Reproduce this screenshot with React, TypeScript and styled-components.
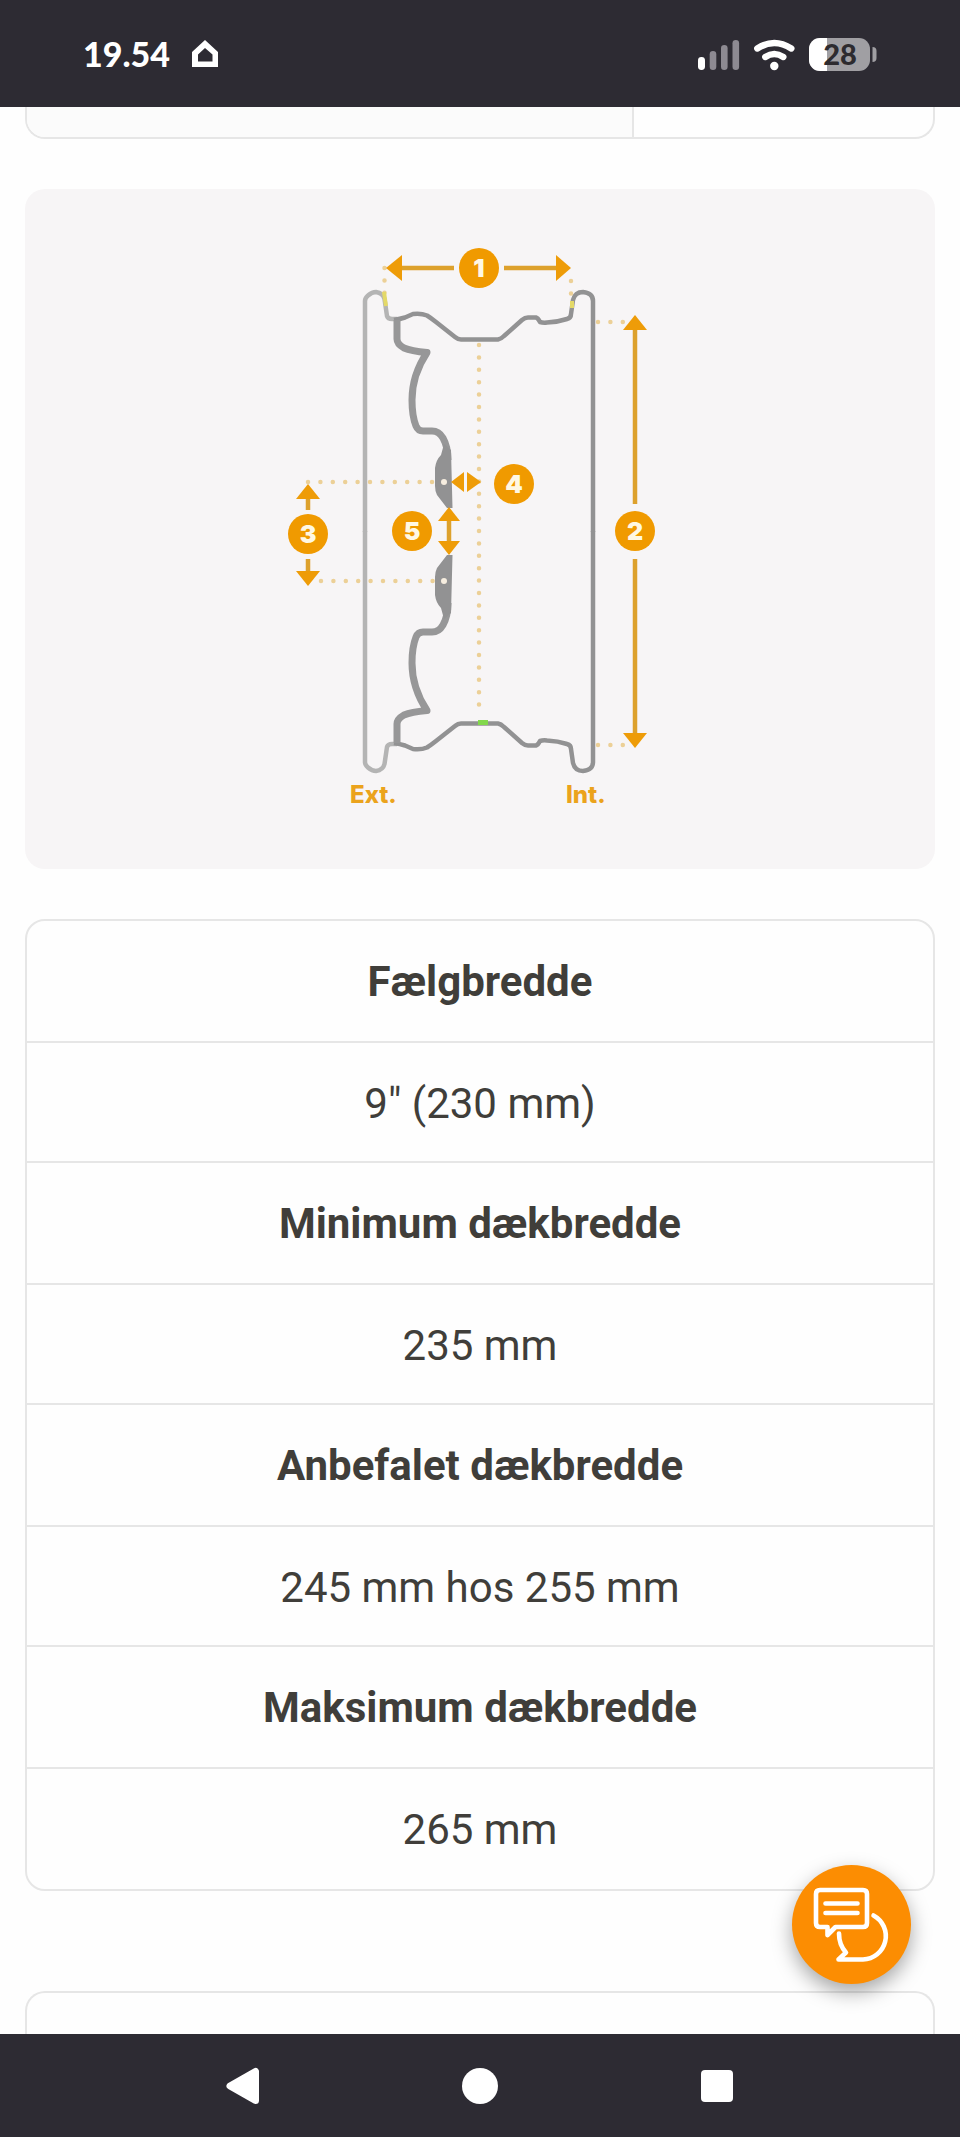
import React from 'react';
import styled, { createGlobalStyle } from 'styled-components';

const specs = [
  { label: 'Fælgbredde', value: '9" (230 mm)' },
  { label: 'Minimum dækbredde', value: '235 mm' },
  { label: 'Anbefalet dækbredde', value: '245 mm hos 255 mm' },
  { label: 'Maksimum dækbredde', value: '265 mm' },
];

const markers = [
  { n: 1, x: 479, y: 268 },
  { n: 2, x: 635, y: 531 },
  { n: 3, x: 308, y: 534 },
  { n: 4, x: 514, y: 484 },
  { n: 5, x: 412, y: 531 },
];

const StatusIcons = () => (
  <svg width="180" height="36" viewBox="697 36 180 36" aria-hidden="true">
    <rect x="698" y="57" width="7" height="13" rx="3.4" fill="#fff" />
    <g fill="#8d8a92">
      <rect x="709.7" y="51" width="6.6" height="19" rx="3.3" />
      <rect x="721" y="45" width="6.6" height="25" rx="3.3" />
      <rect x="732.5" y="40" width="6.6" height="30" rx="3.3" />
    </g>
    <g fill="none" stroke="#fff" strokeWidth="6.4" strokeLinecap="round">
      <path d="M757.3 48.5 Q774.3 37.5 791.3 48.5" />
      <path d="M765.3 57 Q774.3 51 783.3 57" />
    </g>
    <circle cx="774.3" cy="66" r="4.2" fill="#fff" />
    <rect x="809" y="38" width="61" height="33" rx="11" fill="#a09fa3" />
    <path d="M827 38H820a11 11 0 0 0-11 11v11a11 11 0 0 0 11 11h7z" fill="#fff" />
    <path d="M872.5 47q4 0 4 4v7q0 4-4 4z" fill="#a09fa3" />
    <BatteryText x="840" y="65" textAnchor="middle">
      28
    </BatteryText>
  </svg>
);

// one half of the rim, the other one is mirrored around the hub
const RimHalf = () => (
  <g fill="none" strokeLinejoin="round">
    <path d="M365 532V301Q365 298 368 295.500Q372 292 376 292Q383 293 384.500 299L387 316Q388 319 392 319H397" stroke="#b4b4b4" strokeWidth="4.500" />
    <path
      d="M394 320Q400 319 405 317.500L413 314Q421 313 427 315.500Q431 318 436 322L455 337Q458 339.500 461 339.500H498Q501 339 504 336L522 320Q525 317.500 528 317.500H536Q538 318 540 322Q543 323 547 322.500Q558 322 567 319Q571 318 571 314L573 300Q575 292 583 292Q593 293 593 301V532"
      stroke="#929293"
      strokeWidth="4.500"
    />
    <path d="M397 320V339Q397 344 404 348Q411 351 427 352.500Q412 375 412 400Q412 416 416 426Q418 431 423 431H432Q439 431 443 438Q448 447 448 460" stroke="#979798" strokeWidth="7" />
    <path d="M444 444L451 450L452.500 508H447L437 495Q435 491 435 486V468Q436 460 441 455Z" fill="#929293" />
    <circle cx="444" cy="482" r="3" fill="#f7eee0" />
  </g>
);

const WheelDiagram = () => (
  <Drawing viewBox="260 229 440 600" role="img" aria-label="Fælgens mål">
    <RimHalf />
    <g transform="translate(0 1063) scale(1 -1)">
      <RimHalf />
    </g>
    <g fill="none" stroke="#ecd097" strokeWidth="4.500" strokeLinecap="round" strokeDasharray="0 12.400">
      <path d="M479 345V716" />
      <path d="M308 482H434" />
      <path d="M321 581H434" />
      <path d="M384.500 268V294" />
      <path d="M571 281V295" />
      <path d="M598 322H624" />
      <path d="M598 745H624" />
    </g>
    <path d="M384 292L386 306M572 301V308" stroke="#e4d968" strokeWidth="4" />
    <rect x="478" y="720" width="10" height="5" fill="#82d84c" />
    <g stroke="#dda12c" strokeWidth="4.500">
      <path d="M401 268H454M504 268H557" />
      <path d="M635 328V504M635 559V734" />
      <path d="M308 497V510M308 559V573" />
      <path d="M449 520V543" />
    </g>
    <g fill="#ee9c08">
      <path d="M386 268L402 255V281Z" />
      <path d="M571 268L556 255V281Z" />
      <path d="M635 315L647 330H623Z" />
      <path d="M635 748L647 733H623Z" />
      <path d="M308 484L320 499H296Z" />
      <path d="M308 586L320 571H296Z" />
      <path d="M449 507L460 521H438Z" />
      <path d="M449 555L460 541H438Z" />
      <path d="M451 482L464 472V492Z" />
      <path d="M481 482L467 472V492Z" />
    </g>
    {markers.map((m) => (
      <g key={m.n}>
        <circle cx={m.x} cy={m.y} r="20" fill="#f09a00" />
        <MarkerText x={m.x} y={m.y + 9} textAnchor="middle">
          {m.n}
        </MarkerText>
      </g>
    ))}
    <SideText x="350" y="803">
      Ext.
    </SideText>
    <SideText x="566" y="803">
      Int.
    </SideText>
  </Drawing>
);

const App = () => {
  return (
    <Page>
      <GlobalStyle />
      <StatusBar>
        <Clock>19.54</Clock>
        <svg width="26" height="28" viewBox="0 0 26 28" aria-hidden="true">
          <path fill="#fff" fillRule="evenodd" d="M13 0L26 12V27H0V12ZM13 8L6 14.500V21.500H20.500V14.500Z" />
        </svg>
        <StatusRight>
          <StatusIcons />
        </StatusRight>
      </StatusBar>
      <Content>
        <PreviousPanel>
          <PanelLabel />
        </PreviousPanel>
        <DiagramCard>
          <WheelDiagram />
        </DiagramCard>
        <SpecTable>
          <tbody>
            {specs.map((spec) => (
              <React.Fragment key={spec.label}>
                <tr>
                  <SpecLabel scope="row">{spec.label}</SpecLabel>
                </tr>
                <tr>
                  <SpecValue>{spec.value}</SpecValue>
                </tr>
              </React.Fragment>
            ))}
          </tbody>
        </SpecTable>
        <NextPanel />
      </Content>
      <NavBar>
        <NavButton type="button" aria-label="Tilbage">
          <svg width="34" height="38" viewBox="0 0 34 38">
            <path d="M4 19L29.500 4.500V33.500Z" fill="#fff" stroke="#fff" strokeWidth="7" strokeLinejoin="round" />
          </svg>
        </NavButton>
        <NavButton type="button" aria-label="Hjem">
          <svg width="36" height="36" viewBox="0 0 36 36">
            <circle cx="18" cy="18" r="18" fill="#fff" />
          </svg>
        </NavButton>
        <NavButton type="button" aria-label="Seneste apps">
          <svg width="32" height="32" viewBox="0 0 32 32">
            <rect width="32" height="32" rx="4" fill="#fff" />
          </svg>
        </NavButton>
      </NavBar>
      <ChatButton type="button" aria-label="Chat">
        <svg width="119" height="119" viewBox="0 0 119 119" fill="none" stroke="#fff" strokeWidth="4.600" strokeLinecap="round" strokeLinejoin="round">
          <path d="M28 25H71Q75 25 75 29V58Q75 62 71 62H43.500L35.500 70V62H28Q24 62 24 58V29Q24 25 28 25Z" />
          <path d="M33.500 38.500H65.500M33.500 48H65.500" />
          <path d="M81.500 50.500A23.400 23.400 0 0 1 71 94.500H46.500L54 87.500Q47 80 47 68.500" />
        </svg>
      </ChatButton>
    </Page>
  );
};

export default App;

const GlobalStyle = createGlobalStyle`
  * {
    box-sizing: border-box;
  }

  body {
    margin: 0;
    background: #fefefe;
    color: #403e3a;
    font-family: Roboto, 'Liberation Sans', sans-serif;
  }

  svg {
    display: block;
  }
`;

const Page = styled.div`
  display: flex;
  flex-direction: column;
  min-height: 100vh;
`;

const StatusBar = styled.header`
  display: flex;
  align-items: center;
  height: 107px;
  padding: 0 83px;
  background: #2d2b33;
  color: #fff;
`;

const Clock = styled.time`
  margin-right: 22px;
  font-family: Lato, sans-serif;
  font-size: 34px;
  font-weight: 900;
  line-height: 40px;
`;

const StatusRight = styled.div`
  margin-left: auto;
`;

const BatteryText = styled.text`
  fill: #2d2b2f;
  font-family: Lato, sans-serif;
  font-size: 29px;
  font-weight: 900;
`;

const Content = styled.main`
  flex: 1;
  display: flex;
  flex-direction: column;
  padding: 0 25px;
`;

const PreviousPanel = styled.div`
  display: flex;
  height: 32px;
  margin-bottom: 50px;
  border: 2px solid #e6e6e6;
  border-top: 0;
  border-radius: 0 0 20px 20px;
  overflow: hidden;
`;

const PanelLabel = styled.div`
  width: 67%;
  background: #fbfbfb;
  border-right: 2px solid #e6e6e6;
`;

const DiagramCard = styled.figure`
  display: flex;
  justify-content: center;
  margin: 0 0 50px;
  padding: 40px 0;
  border-radius: 20px;
  background: #f7f5f6;
`;

const Drawing = styled.svg`
  width: 440px;
  max-width: 100%;
`;

const MarkerText = styled.text`
  fill: #fff8e4;
  font-family: Inter, sans-serif;
  font-size: 25px;
  font-weight: 900;
`;

const SideText = styled.text`
  fill: #eba31c;
  font-family: Inter, sans-serif;
  font-size: 24px;
  font-weight: 800;
`;

const SpecTable = styled.table`
  width: 100%;
  margin-bottom: 100px;
  border: 2px solid #e6e6e6;
  border-radius: 20px;
  border-spacing: 0;
  text-align: center;
`;

const SpecLabel = styled.th`
  padding: 37px 20px 35px;
  border-bottom: 2px solid #e6e6e6;
  font-size: 42px;
  font-weight: 700;
  line-height: 48px;
`;

const SpecValue = styled.td`
  padding: 37px 20px 33px;
  border-bottom: 2px solid #e6e6e6;
  font-size: 42px;
  line-height: 48px;

  tr:last-child > & {
    padding-bottom: 35px;
    border-bottom: 0;
  }
`;

const NextPanel = styled.div`
  flex: 1;
  border: 2px solid #e6e6e6;
  border-bottom: 0;
  border-radius: 20px 20px 0 0;
`;

const NavBar = styled.nav`
  display: grid;
  grid-template-columns: repeat(3, 1fr);
  height: 103px;
  padding: 0 13%;
  background: #2d2b33;
`;

const NavButton = styled.button`
  display: flex;
  align-items: center;
  justify-content: center;
  padding: 0;
  border: 0;
  background: none;
  cursor: pointer;
`;

const ChatButton = styled.button`
  position: fixed;
  right: 49px;
  bottom: 153px;
  padding: 0;
  border: 0;
  border-radius: 50%;
  background: #fc8d02;
  box-shadow: 0 8px 20px rgba(0, 0, 0, 0.35);
  cursor: pointer;
`;
